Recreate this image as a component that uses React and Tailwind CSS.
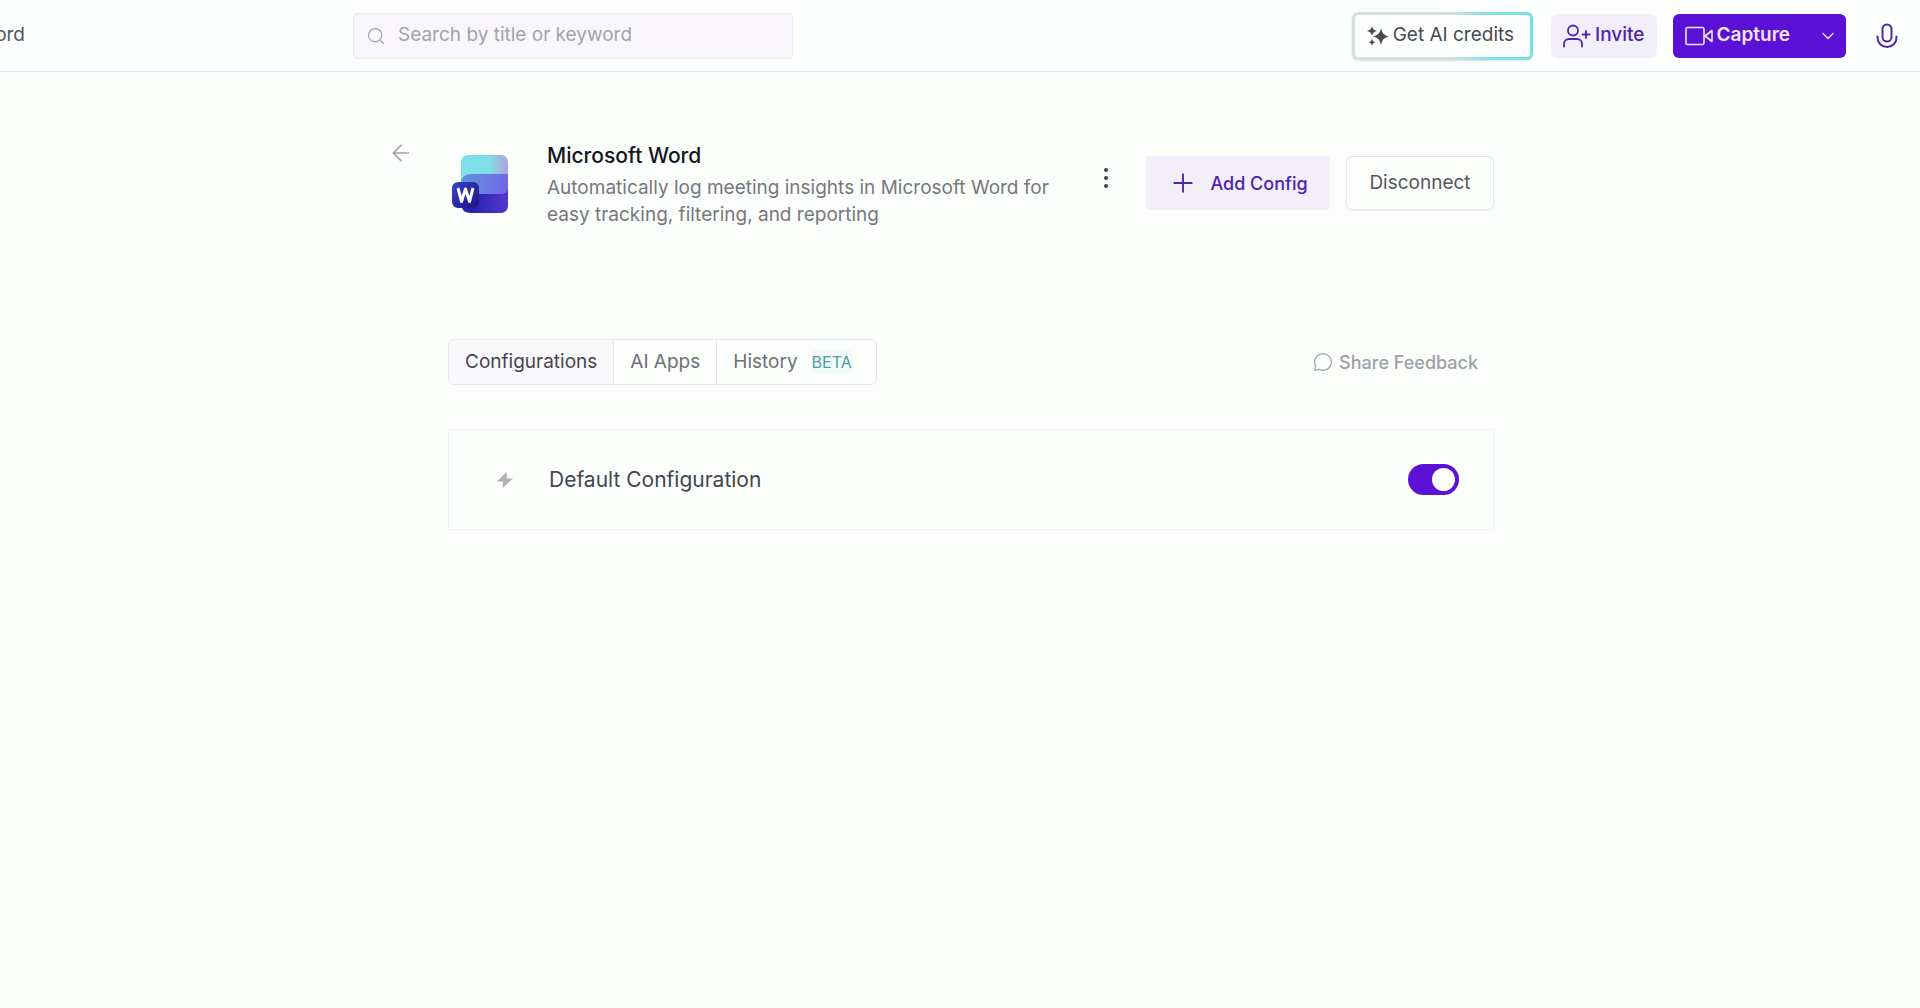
import { useState } from 'react';
import { ArrowLeft, ChevronDown, MessageCircle, Plus, Search } from 'lucide-react';

const tabs = [
  { id: 'configurations', label: 'Configurations' },
  { id: 'ai-apps', label: 'AI Apps' },
  { id: 'history', label: 'History', badge: 'BETA' },
];

function SparklesIcon() {
  return (
    <svg width="22" height="20" viewBox="0 0 22 20" fill="currentColor" aria-hidden="true">
      <path d="M14 2c1.100 5.200 2.700 7 8 8.500-5.300 1.500-6.900 3.300-8 8.500-1.100-5.200-2.700-7-8-8.500 5.300-1.500 6.900-3.300 8-8.500z" />
      <path d="M5 0c.7 2.900 1.700 4 5 4.900C6.700 5.800 5.700 6.900 5 9.800 4.300 6.900 3.300 5.800 0 4.900 3.300 4 4.300 2.900 5 0z" />
      <path d="M5 12.500c.5 2.200 1.200 3 3.500 3.700C6.200 16.900 5.500 17.700 5 19.900c-.5-2.200-1.200-3-3.500-3.700C3.800 15.500 4.500 14.700 5 12.500z" />
    </svg>
  );
}

function InviteIcon() {
  return (
    <svg width="28" height="24" viewBox="0 0 28 24" fill="none" stroke="currentColor" strokeWidth="1.800" strokeLinecap="round" strokeLinejoin="round" aria-hidden="true">
      <circle cx="10" cy="6.500" r="5" />
      <path d="M1 22.500v-2.500a5 5 0 0 1 5-5h8a5 5 0 0 1 5 5v2.500" />
      <path d="M23 7v7M19.500 10.500h7" />
    </svg>
  );
}

function CameraIcon() {
  return (
    <svg width="28" height="20" viewBox="0 0 28 20" fill="none" stroke="currentColor" strokeWidth="1.600" strokeLinejoin="round" aria-hidden="true">
      <rect x="1" y="1.500" width="18" height="17" rx="1.500" />
      <path d="M27 4.500v11L20 10z" />
    </svg>
  );
}

function MicIcon() {
  return (
    <svg width="22" height="26" viewBox="0 0 22 26" fill="none" stroke="currentColor" strokeWidth="2" strokeLinecap="round" aria-hidden="true">
      <rect x="6.500" y="1.500" width="9" height="17" rx="4.500" />
      <path d="M1.500 13.500v1a9.500 9.500 0 0 0 19 0v-1" />
    </svg>
  );
}

function WordLogo() {
  return (
    <svg width="56" height="60" viewBox="0 0 56 60" className="shrink-0" role="img" aria-label="Microsoft Word">
      <defs>
        <linearGradient id="wordTop" x1="0" y1="0" x2="1" y2="0">
          <stop offset=".6" stopColor="#7fdfe6" />
          <stop offset="1" stopColor="#b3a0e0" />
        </linearGradient>
        <linearGradient id="wordMid" x1="0" y1="0" x2="1" y2="0">
          <stop offset="0" stopColor="#5c94dc" />
          <stop offset="1" stopColor="#7468e6" />
        </linearGradient>
        <linearGradient id="wordLow" x1="0" y1="0" x2="1" y2="0">
          <stop offset=".3" stopColor="#2823b4" />
          <stop offset="1" stopColor="#5737cc" />
        </linearGradient>
        <linearGradient id="wordTile" x1="0" y1="0" x2="1" y2="1">
          <stop offset="0" stopColor="#3344d0" />
          <stop offset="1" stopColor="#24107c" />
        </linearGradient>
        <clipPath id="wordPage">
          <rect x="9" y="1" width="47" height="58" rx="7" />
        </clipPath>
      </defs>
      <g clipPath="url(#wordPage)">
        <rect x="9" y="1" width="47" height="30" fill="url(#wordTop)" />
        <path d="M9 30q0-10 10-10h37v22H9z" fill="url(#wordMid)" />
        <path d="M9 49q0-9 10-9h29q8 0 8-6v25H19q-10 0-10-10z" fill="url(#wordLow)" />
      </g>
      <rect x="0" y="28" width="27" height="26" rx="6" fill="url(#wordTile)" />
      <path d="M6 34l3.500 13.500L13.500 35l4 12.500L21 34" fill="none" stroke="#fff" strokeWidth="3" strokeLinejoin="round" />
    </svg>
  );
}

function Header() {
  return (
    <header className="flex h-[72px] items-center border-b border-[#e4e5e7] bg-[#fdfefe] pr-[22px]">
      <div className="w-[353px] shrink-0">
        <span className="flex w-[25px] justify-end overflow-hidden text-[19px] text-[#55555f]">ord</span>
      </div>
      <label className="flex h-[46px] w-[440px] items-center gap-3 rounded-sm border border-[#ebe8ef] bg-[#f9f7fc] px-3 text-[#a3a3ab]">
        <Search size={20} strokeWidth={1.5} className="shrink-0" />
        <input
          type="text"
          aria-label="Search"
          placeholder="Search by title or keyword"
          className="min-w-0 flex-1 bg-transparent text-[19px] outline-none placeholder:text-[#a3a3ab]"
        />
      </label>

      <div className="ml-auto flex shrink-0 items-center">
        <button className="rounded-md bg-linear-to-r from-[#dcdfdd] from-50% to-[#79dfe4] to-80% p-[3px] shadow-sm">
          <span className="flex h-[42px] items-center gap-1 rounded-sm bg-[#fcfdfd] pr-4 pl-3 text-[19px] text-[#4b4b4f]">
            <SparklesIcon />
            Get AI credits
          </span>
        </button>
        <button className="ml-[18px] flex h-11 items-center gap-1 rounded-md bg-[#f2eefa] px-3 text-[19px] font-medium text-[#4f22b0]">
          <InviteIcon />
          Invite
        </button>
        <div className="ml-4 flex h-11 items-center rounded-md bg-[#5b10d6] text-[#efe6fd]">
          <button className="flex items-center gap-1 pl-3 text-[19px] font-semibold">
            <CameraIcon />
            Capture
          </button>
          <button className="pr-2 pl-7" aria-label="More capture options">
            <ChevronDown size={20} strokeWidth={1.5} />
          </button>
        </div>
        <button className="ml-[30px] text-[#4f2aa8]" aria-label="Record audio">
          <MicIcon />
        </button>
      </div>
    </header>
  );
}

function IntegrationHeader() {
  return (
    <section className="flex items-start">
      <div className="pt-[14px] pl-1">
        <WordLogo />
      </div>
      <div className="ml-[39px] w-[520px]">
        <h1 className="text-[21px] leading-8 font-medium text-[#15151f]">Microsoft Word</h1>
        <p className="mt-[2px] text-[19px] leading-[27px] text-[#77777f]">
          Automatically log meeting insights in Microsoft Word for easy tracking, filtering, and reporting
        </p>
      </div>
      <button className="mt-[23px] ml-auto flex w-6 justify-center py-1 text-[#3f3f4a]" aria-label="More options">
        <svg width="4" height="22" viewBox="0 0 4 22" fill="currentColor">
          <circle cx="2" cy="3" r="2" />
          <circle cx="2" cy="11" r="2" />
          <circle cx="2" cy="19" r="2" />
        </svg>
      </button>
      <button className="mt-4 ml-7 flex h-[54px] w-[184px] items-center justify-center gap-3 rounded-sm bg-[#f2eefa] text-[18px] font-medium text-[#4f22b0]">
        <Plus size={30} strokeWidth={1.5} />
        Add Config
      </button>
      <button className="mt-4 ml-4 h-[54px] w-[148px] rounded-md border border-[#e5e5e8] text-[19px] text-[#55555a] shadow-xs">
        Disconnect
      </button>
    </section>
  );
}

function Tabs({ active, onChange }) {
  return (
    <div role="tablist" className="flex h-[46px] overflow-hidden rounded-md border border-[#e8e6ec] text-[19px]">
      {tabs.map((tab) => (
        <button
          key={tab.id}
          role="tab"
          aria-selected={active === tab.id}
          onClick={() => onChange(tab.id)}
          className={`flex items-center gap-[14px] border-r border-[#e8e6ec] px-4 last:border-r-0 last:pr-6 ${
            active === tab.id ? 'bg-[#f9f8fb] text-[#45454f]' : 'text-[#6f6f78]'
          }`}
        >
          {tab.label}
          {tab.badge && <span className="bg-[#f3fafa] text-[16px] text-[#4d9ea4]">{tab.badge}</span>}
        </button>
      ))}
    </div>
  );
}

function ConfigRow({ name }) {
  const [enabled, setEnabled] = useState(true);

  return (
    <label className="flex h-[101px] items-center border border-[#f2f2f6] pr-[34px] pl-12">
      <svg width="16" height="16" viewBox="0 0 16 16" fill="#b0b0b3" aria-hidden="true">
        <path d="M9.500 0L0 9.500h6L5.500 16 16 6.500h-6z" />
      </svg>
      <span className="ml-9 text-[21px] text-[#45454f]">{name}</span>
      <input
        type="checkbox"
        role="switch"
        checked={enabled}
        onChange={(e) => setEnabled(e.target.checked)}
        className="ml-auto flex h-[31px] w-[51px] appearance-none items-center rounded-full bg-[#c9c9d2] px-1 before:size-[23px] before:rounded-full before:bg-white checked:justify-end checked:bg-[#5b10d6]"
      />
    </label>
  );
}

export default function App() {
  const [activeTab, setActiveTab] = useState('configurations');

  return (
    <div className="min-h-screen bg-[#fcfefc] font-['Inter',sans-serif]">
      <Header />
      <main className="pt-[68px] pr-[38px]">
        <div className="mx-auto flex max-w-[1106px] items-start">
          <button className="w-[60px] shrink-0 text-[#a3a3a8]" aria-label="Back">
            <ArrowLeft size={26} strokeWidth={1.5} />
          </button>
          <div className="min-w-0 flex-1">
            <IntegrationHeader />
            <div className="mt-[111px] flex items-center justify-between pr-4">
              <Tabs active={activeTab} onChange={setActiveTab} />
              <a href="#feedback" className="flex items-center gap-[6px] text-[18px] font-medium text-[#a0a0a8]">
                <MessageCircle size={20} strokeWidth={1.5} />
                Share Feedback
              </a>
            </div>
            <div className="mt-11">
              <ConfigRow name="Default Configuration" />
            </div>
          </div>
        </div>
      </main>
    </div>
  );
}
